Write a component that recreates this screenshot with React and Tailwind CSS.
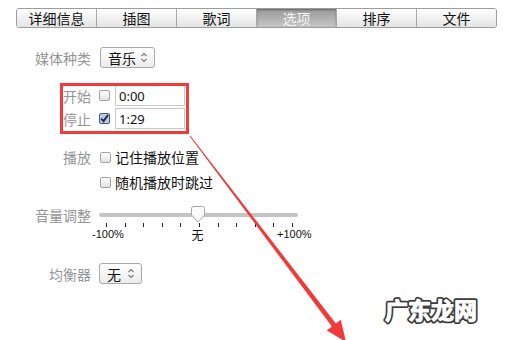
import React from "react";

const CJK = "font-['Microsoft_YaHei','Noto_Sans_CJK_SC',sans-serif]";

function Tab({ label, active }) {
  return (
    <div
      className={
        "flex-1 flex items-center justify-center text-[14px] leading-[18px] border-l border-[#a8a8a8] first:border-l-0 " +
        (active
          ? "bg-linear-to-b from-[#9a9a9a] to-[#c6c6c6] text-[#f4f4f4] shadow-[inset_0_1px_2px_rgba(0,0,0,0.35)]"
          : "bg-linear-to-b from-white to-[#e4e4e4] text-[#111]")
      }
    >
      {label}
    </div>
  );
}

function Chevrons() {
  return (
    <svg width="8" height="11" viewBox="0 0 8 11" className="shrink-0">
      <path d="M1.5 4 L4 1.5 L6.5 4" fill="none" stroke="#777" strokeWidth="1.1" />
      <path d="M1.5 7 L4 9.5 L6.5 7" fill="none" stroke="#777" strokeWidth="1.1" />
    </svg>
  );
}

function Select({ value, w }) {
  return (
    <div
      className={
        "flex items-center justify-between h-[21px] pl-[7px] pr-[6px] border border-[#a9a9a9] rounded-[3px] bg-linear-to-b from-white to-[#ececec] text-[14px] leading-[18px] text-[#111] " +
        w
      }
    >
      <span>{value}</span>
      <Chevrons />
    </div>
  );
}

function Check({ checked }) {
  if (checked) {
    return (
      <span className="flex items-center justify-center w-[11px] h-[11px] border border-[#3f5b7f] rounded-[2px] bg-[#bccbdd] shrink-0">
        <svg width="9" height="9" viewBox="0 0 9 9">
          <path d="M1.2 4.6 L3.6 7.2 L8 1" fill="none" stroke="#1b2f4e" strokeWidth="2" />
        </svg>
      </span>
    );
  }
  return (
    <span className="w-[11px] h-[11px] border border-[#a3a3a3] rounded-[2px] bg-linear-to-b from-white to-[#e2e2e2] shrink-0" />
  );
}

function Label({ children }) {
  return (
    <span className="w-[91px] text-right text-[14px] leading-[18px] text-[#959595] shrink-0">
      {children}
    </span>
  );
}

function Input({ value }) {
  return (
    <div className="w-[70px] h-[21px] border border-[#c8c8c8] bg-white flex items-center pl-[3px] font-['Noto_Sans',sans-serif] text-[13px] leading-[16px] text-[#111]">
      {value}
    </div>
  );
}

export default function App() {
  const ticks = Array.from({ length: 11 });
  return (
    <div className={"relative w-[518px] h-[340px] bg-white overflow-hidden " + CJK}>
      {/* Tabs */}
      <div className="pt-[8px] pl-[16px]">
        <div className="flex w-[481px] h-[20px] border border-[#9c9c9c] rounded-[3px] overflow-hidden">
          <Tab label="详细信息" />
          <Tab label="插图" />
          <Tab label="歌词" />
          <Tab label="选项" active />
          <Tab label="排序" />
          <Tab label="文件" />
        </div>
      </div>

      {/* 媒体种类 */}
      <div className="mt-[19px] flex items-center h-[21px]">
        <Label>媒体种类</Label>
        <div className="ml-[9px]">
          <Select value="音乐" w="w-[55px]" />
        </div>
      </div>

      {/* 开始 / 停止 */}
      <div className="mt-[17px] flex items-center h-[21px]">
        <Label>开始</Label>
        <div className="ml-[8px] flex items-center gap-[5px]">
          <Check />
          <Input value="0:00" />
        </div>
      </div>
      <div className="mt-[2px] flex items-center h-[21px]">
        <Label>停止</Label>
        <div className="ml-[8px] flex items-center gap-[5px]">
          <Check checked />
          <Input value="1:29" />
        </div>
      </div>

      {/* 播放 */}
      <div className="mt-[18px] flex items-center h-[20px]">
        <Label>播放</Label>
        <div className="ml-[9px] flex items-center gap-[4px] text-[14px] leading-[18px] text-[#111]">
          <Check />
          <span>记住播放位置</span>
        </div>
      </div>
      <div className="mt-[5px] flex items-center h-[20px]">
        <span className="w-[91px] shrink-0" />
        <div className="ml-[9px] flex items-center gap-[4px] text-[14px] leading-[18px] text-[#111]">
          <Check />
          <span>随机播放时跳过</span>
        </div>
      </div>

      {/* 音量调整 */}
      <div className="mt-[13px] flex items-center h-[20px]">
        <Label>音量调整</Label>
        <div className="ml-[8px] relative w-[199px] h-[20px] flex items-center">
          <div className="w-full h-[4px] rounded-full bg-[#c4c4c4]" />
          <svg
            width="14"
            height="17"
            viewBox="0 0 14 17"
            className="absolute left-[92px] top-[1px]"
          >
            <path
              d="M2.5 0.5 H11.5 Q13.5 0.5 13.5 2.5 V9 L7 16 L0.5 9 V2.5 Q0.5 0.5 2.5 0.5 Z"
              fill="#fafafa"
              stroke="#a8a8a8"
            />
          </svg>
        </div>
      </div>
      <div className="-mt-[2px] ml-[106px] w-[187px] flex justify-between h-[5px]">
        {ticks.map((_, i) => (
          <span key={i} className="w-[1px] h-[4px] bg-[#222]" />
        ))}
      </div>
      <div className="ml-[92px] w-[219px] h-[13px] grid grid-cols-[32px_1fr_34px] items-center text-[11px] leading-[13px] text-[#111] font-['Liberation_Sans',sans-serif]">
        <span>-100%</span>
        <span className={"text-center text-[12px] leading-[13px] pr-[6px] " + CJK}>无</span>
        <span className="text-right">+100%</span>
      </div>

      {/* 均衡器 */}
      <div className="mt-[22px] flex items-center h-[21px]">
        <Label>均衡器</Label>
        <div className="ml-[8px]">
          <Select value="无" w="w-[43px]" />
        </div>
      </div>

      {/* Annotation: red box */}
      <div className="absolute left-[60px] top-[83px] w-[129px] h-[51px] border-[3px] border-[#f23a3a]" />

      {/* Annotation: red arrow */}
      <svg
        className="absolute left-0 top-0"
        width="518"
        height="340"
        viewBox="0 0 518 340"
      >
        <polygon
          points="190.4,135.7 335.9,323.6 340.8,319.8 346,342 326.8,330.4 331.9,326.6 189.6,136.3"
          fill="#f23a3a"
        />
      </svg>

      {/* Watermark */}
      <svg className="absolute left-[380px] top-[292px]" width="110" height="36" viewBox="0 0 110 36">
        <text
          x="5"
          y="27"
          fontSize="23"
          fontWeight="700"
          fontFamily="'Noto Sans CJK SC', sans-serif"
          fill="#3a3a3a"
          stroke="#3a3a3a"
          strokeWidth="4.5"
          strokeLinejoin="round"
        >
          广东龙网
        </text>
        <text
          x="5"
          y="27"
          fontSize="23"
          fontWeight="700"
          fontFamily="'Noto Sans CJK SC', sans-serif"
          fill="#ffffff"
          stroke="#ffffff"
          strokeWidth="1"
          strokeLinejoin="round"
        >
          广东龙网
        </text>
      </svg>
    </div>
  );
}
